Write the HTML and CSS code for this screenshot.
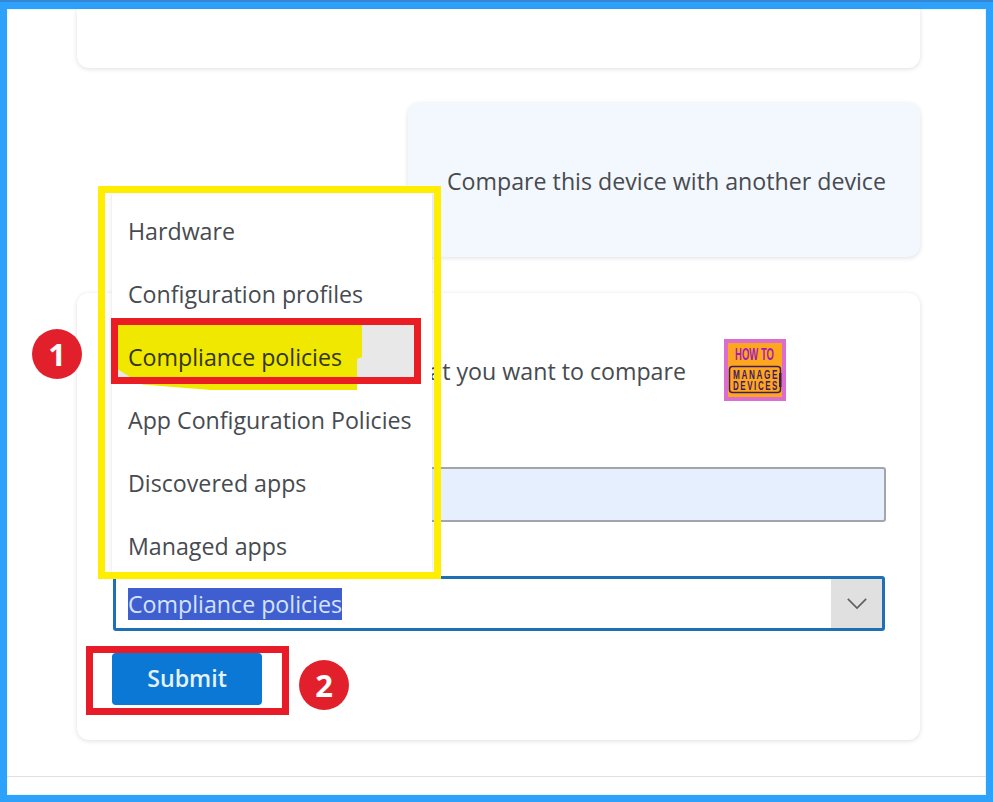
FILE: index.html
```html
<!DOCTYPE html>
<html lang="en">
<head>
<meta charset="utf-8">
<title>Compare devices</title>
<link rel="stylesheet" href="styles.css">
</head>
<body>
<div class="screen">
  <div class="frame">
    <main class="content">
      <section class="card card-top"></section>
      <section class="card card-compare"><p class="compare-text">Compare this device with another device</p></section>
      <section class="card card-form">
        <div class="prompt-row">
          <p class="prompt">Select the category that you want to compare</p>
          <svg class="logo" viewBox="0 0 62 62" role="img" aria-label="How To Manage Devices">
            <rect class="logo-bg" x="2" y="2" width="58" height="58"/>
            <text class="logo-how" x="11" y="21" textLength="39" lengthAdjust="spacingAndGlyphs">HOW TO</text>
            <rect class="logo-box" x="5.5" y="27.5" width="51" height="26" rx="3"/>
            <rect class="logo-bar" x="55" y="34" width="2.5" height="14"/>
            <text class="logo-dev" x="9" y="39.5" textLength="46" lengthAdjust="spacingAndGlyphs">MANAGE</text>
            <text class="logo-dev" x="9" y="51" textLength="46" lengthAdjust="spacingAndGlyphs">DEVICES</text>
          </svg>
        </div>
        <div class="text-input"></div>
        <div class="select">
          <span class="select-value"><span class="selected-text">Compliance policies</span></span>
          <span class="select-arrow">
            <svg class="chevron" viewBox="0 0 24 14"><path d="M2 2 L12 12 L22 2"/></svg>
          </span>
        </div>
        <button class="submit" type="button">Submit</button>
      </section>
    </main>
    <div class="footer-line"></div>
  </div>

  <ul class="menu">
    <li class="menu-item">Hardware</li>
    <li class="menu-item">Configuration profiles</li>
    <li class="menu-item menu-item-active"><span class="marker"></span><span class="menu-label">Compliance policies</span></li>
    <li class="menu-item">App Configuration Policies</li>
    <li class="menu-item">Discovered apps</li>
    <li class="menu-item">Managed apps</li>
  </ul>
  <div class="mark mark-yellow"></div>
  <div class="mark mark-red-item"></div>
  <div class="mark mark-red-submit"></div>
  <div class="step step-1">1</div>
  <div class="step step-2">2</div>
</div>
</body>
</html>
```
FILE: styles.css
```css
* { box-sizing: border-box; }
html, body { margin: 0; padding: 0; background: #fff; }
body { font-family: "Open Sans", "Noto Sans", sans-serif; color: #474b50; }
p { margin: 0; }

.screen { position: relative; width: 993px; height: 802px; overflow: hidden; }
.frame {
  width: 993px; height: 802px;
  display: flex; flex-direction: column;
  background: #fff;
  border-style: solid; border-color: #2ea2fa;
  border-width: 9px 7px 7px 7px;
  box-shadow: inset 0 0 0 1px #e4f6ff;
}
.screen::before {
  content: ""; position: absolute; left: 0; right: 0; top: 0; height: 2px;
  background: #3587d6; z-index: 1;
}
.content { display: flex; flex-direction: column; padding: 0 66px 0 70px; }

.card { background: #fff; border-radius: 12px; box-shadow: 0 1px 5px rgba(0,0,0,.13); }
.card-top { height: 59px; border-radius: 0 0 12px 12px; }
.card-compare {
  align-self: flex-end; width: 512px; height: 154px; margin-top: 35px;
  background: #f3f7fe;
  display: flex; align-items: center; padding: 2px 0 0 39px;
}
.compare-text { font-size: 23.2px; white-space: nowrap; }
.card-form { height: 447px; margin-top: 36px; padding: 46px 35px 0 36px; }

.prompt-row { display: flex; justify-content: flex-end; align-items: center; gap: 38px; padding-right: 99px; height: 62px; }
.prompt { font-size: 23.2px; white-space: nowrap; padding-top: 2px; }
.logo { width: 62px; height: 62px; flex: none; }
.logo-bg { fill: #ffa71c; stroke: #d96dd0; stroke-width: 4px; }
.logo-how { font-family: "Liberation Sans", sans-serif; font-weight: 700; font-size: 16.5px; fill: #a41bb5; }
.logo-box { fill: none; stroke: #3d1a66; stroke-width: 1.5px; }
.logo-bar { fill: #3d1a66; }
.logo-dev { font-family: "Liberation Sans", sans-serif; font-weight: 700; font-size: 12.5px; letter-spacing: 2.5px; fill: #3d1a66; }

.text-input { height: 55px; width: 773px; margin-top: 66px; background: #e6effd; border: 2px solid #a3a5ab; border-radius: 3px; }
.select {
  width: 772px; height: 55px; margin-top: 54px;
  display: flex; align-items: stretch;
  border: 3px solid #1f6fb5; border-radius: 3px;
  background: #fff;
}
.select-value { flex: 1; display: flex; align-items: center; padding-left: 12px; font-size: 23.2px; }
.selected-text { background: #3f5fd0; color: #d4e3ff; line-height: 32px; }
.select-arrow { width: 51px; background: #e0e0e0; display: flex; align-items: center; justify-content: center; }
.chevron { width: 22px; height: 13px; fill: none; stroke: #606060; stroke-width: 1.8px; }
.submit {
  display: block; width: 150px; height: 52px; margin-top: 22px; margin-left: -1px; padding-bottom: 3px;
  border: 0; border-radius: 4px; background: #0a78d4; color: #e6f2fb;
  font-family: "Open Sans", sans-serif; font-weight: 600; font-size: 23.2px;
}
.footer-line { height: 1px; margin-top: 36px; background: #e0e0e0; }

.menu {
  position: absolute; left: 112px; top: 193px; width: 320px; height: 380px;
  margin: 0; padding: 6px 0 0 0; list-style: none;
  background: #fff; box-shadow: 0 0 5px rgba(0,0,0,.12);
}
.menu-item {
  position: relative; height: 63px; display: flex; align-items: center;
  padding-left: 16px; font-size: 23.2px; white-space: nowrap;
}
.menu-item-active {
  color: #33360a;
  background: linear-gradient(#e8e8e8, #e8e8e8) no-repeat 0 0 / 302px 58px;
}
.marker {
  position: absolute; left: 6px; top: -3px; width: 244px; height: 68px;
  background: #f0e800;
  clip-path: polygon(0 0, 100% 0, 100% 52%, 98% 54%, 98% 100%, 38% 100%, 10% 92%, 0 70%);
}
.menu-label { position: relative; }

.mark { position: absolute; border-style: solid; background: transparent; }
.mark-yellow { left: 98px; top: 186px; width: 343px; height: 393px; border-width: 7px; border-color: #ffee00; }
.mark-red-item { left: 111px; top: 318px; width: 310px; height: 66px; border-width: 7px; border-color: #ea1c24; }
.mark-red-submit { left: 86px; top: 646px; width: 203px; height: 69px; border-width: 7px; border-color: #e81c28; }

.step {
  position: absolute; width: 50px; height: 50px; border-radius: 50%;
  background: #e2202c; color: #fff;
  display: flex; align-items: center; justify-content: center;
  font-family: "Open Sans", sans-serif; font-weight: 700; font-size: 31px;
}
.step-1 { left: 32px; top: 329px; }
.step-2 { left: 299px; top: 660px; }
```
